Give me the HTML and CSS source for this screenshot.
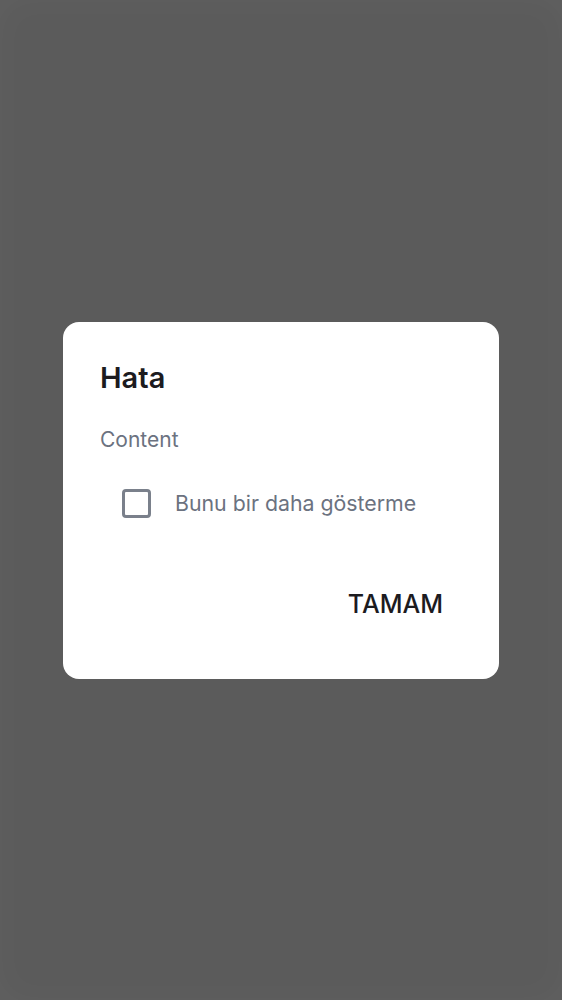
FILE: index.html
```html
<!DOCTYPE html>
<html lang="tr">
<head>
<meta charset="utf-8">
<title>Hata</title>
<link rel="stylesheet" href="styles.css">
</head>
<body>
<div class="scrim">
  <div class="dialog" role="dialog" aria-labelledby="dlg-title">
    <h1 class="dialog-title" id="dlg-title">Hata</h1>
    <p class="dialog-content">Content</p>
    <label class="check-row">
      <span class="checkbox" aria-hidden="true"></span>
      <span class="check-label">Bunu bir daha gösterme</span>
    </label>
    <div class="dialog-actions">
      <button class="text-button" type="button">TAMAM</button>
    </div>
  </div>
</div>
</body>
</html>
```
FILE: styles.css
```css
html, body {
  margin: 0;
  padding: 0;
  height: 100%;
}

body {
  background: #5b5b5b;
  font-family: Inter, Roboto, "Liberation Sans", sans-serif;
}

.scrim {
  min-height: 100%;
  box-sizing: border-box;
  display: flex;
  align-items: center;
  justify-content: center;
  padding: 0 63px;
  box-shadow: inset 0 0 36px rgba(255, 255, 255, 0.035);
}

.dialog {
  width: 100%;
  background: #ffffff;
  border-radius: 16px;
  box-sizing: border-box;
  padding: 38px 0 60px 37px;
  display: flex;
  flex-direction: column;
}

.dialog-title {
  margin: 0;
  font-size: 29px;
  line-height: 35px;
  font-weight: 600;
  color: #1c1b1f;
}

.dialog-content {
  margin: 32px 0 0;
  font-size: 21px;
  line-height: 25px;
  font-weight: 400;
  color: #6b7280;
}

.check-row {
  margin: 37px 0 0 22px;
  display: flex;
  align-items: center;
  gap: 24px;
}

.checkbox {
  width: 29px;
  height: 29px;
  box-sizing: border-box;
  border: 3px solid #7a808b;
  border-radius: 4px;
  flex: none;
}

.check-label {
  font-size: 21.3px;
  line-height: 25px;
  color: #6b7280;
}

.dialog-actions {
  margin-top: 71px;
  display: flex;
  justify-content: flex-end;
  padding-right: 56px;
}

.text-button {
  border: none;
  background: none;
  padding: 0;
  font-family: Inter, Roboto, "Liberation Sans", sans-serif;
  font-size: 25px;
  line-height: 30px;
  font-weight: 500;
  color: #1c1b1f;
  cursor: pointer;
}
```
